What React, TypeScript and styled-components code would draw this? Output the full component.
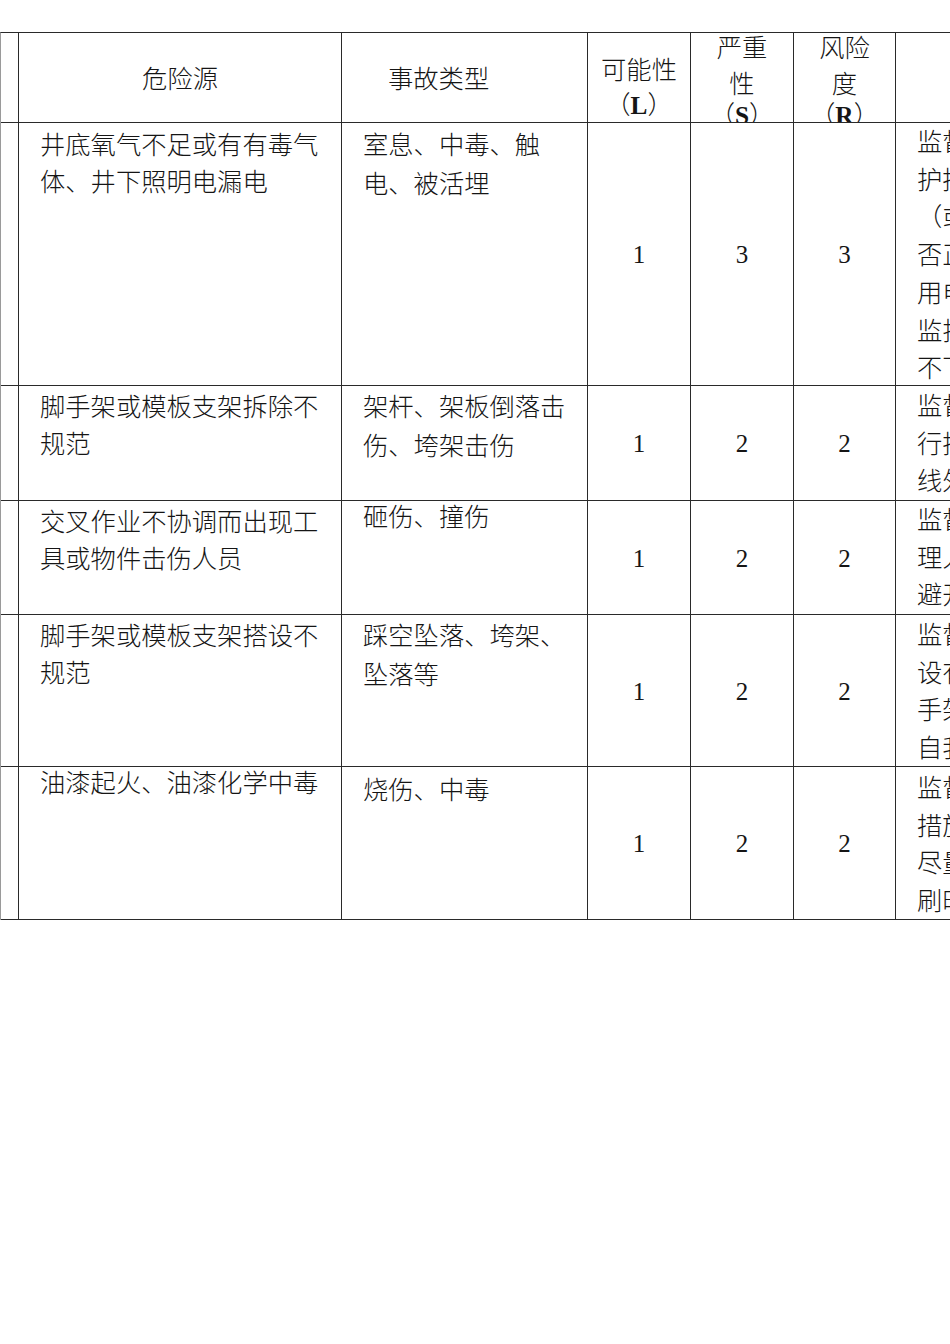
import React from 'react';
import styled, { createGlobalStyle } from 'styled-components';

const Global = createGlobalStyle`
  html, body { margin: 0; padding: 0; background: #fff; overflow: hidden; }
  body { font-family: "Liberation Serif", "Noto Sans CJK SC", serif; color: #151515; font-weight: 300; }
`;

const Page = styled.div`
  width: 950px;
  height: 1344px;
  overflow: hidden;
  padding-top: 32px;
  box-sizing: border-box;
`;

const Grid = styled.div`
  display: grid;
  grid-template-columns: 18px 323px 246px 103px 103px 102px 320px;
  grid-template-rows: 90px 263px 115px 114px 152px 153px;
  width: max-content;
  border-top: 1px solid #2a2a2a;
  border-left: 1px solid #9a9a9a;
  font-size: 25.3px;
`;

const Cell = styled.div`
  box-sizing: border-box;
  border-right: 1px solid #2a2a2a;
  border-bottom: 1px solid #2a2a2a;
  overflow: hidden;
  min-width: 0;
`;

const HeadCell = styled(Cell)<{ $left?: number; $top?: boolean }>`
  display: flex;
  flex-direction: column;
  align-items: ${(p) => (p.$left !== undefined ? 'flex-start' : 'center')};
  justify-content: ${(p) => (p.$top ? 'flex-start' : 'center')};
  padding-left: ${(p) => p.$left ?? 0}px;
  line-height: 36px;
  text-align: center;
`;

const Lines = styled.div<{ $shift?: number; $lh?: number }>`
  margin-top: ${(p) => p.$shift ?? 0}px;
  line-height: ${(p) => p.$lh ?? 36}px;
`;

const Line = styled.span<{ $lh?: number }>`
  display: block;
  white-space: nowrap;
  ${(p) => (p.$lh ? `line-height: ${p.$lh}px;` : '')}
`;

const Bold = styled.b`
  font-weight: 700;
`;

const TextCell = styled(Cell)`
  padding: 0 21px;
`;

const NumCell = styled(Cell)`
  display: flex;
  align-items: center;
  justify-content: center;
  font-size: 25px;
  padding-top: 2px;
`;

type Row = {
  hazard: string[];
  hShift: number;
  accident: string[];
  aShift: number;
  l: string;
  s: string;
  r: string;
  measure: string[];
  mShift: number;
};

const rows: Row[] = [
  {
    hazard: ['井底氧气不足或有有毒气', '体、井下照明电漏电'],
    hShift: 3.5,
    accident: ['室息、中毒、触', '电、被活埋'],
    aShift: 2.5,
    l: '1',
    s: '3',
    r: '3',
    measure: [
      '监督检查井下通风防',
      '护措施是否到位',
      '（或气体检测）是',
      '否正常，井下照明',
      '用电是否使用安全',
      '监护人员是否到位',
      '不下井作业',
    ],
    mShift: 1,
  },
  {
    hazard: ['脚手架或模板支架拆除不', '规范'],
    hShift: 2.5,
    accident: ['架杆、架板倒落击', '伤、垮架击伤'],
    aShift: 1.5,
    l: '1',
    s: '2',
    r: '2',
    measure: ['监督检查拆除作业', '行拆除前安全交底', '线外设置警戒区'],
    mShift: 2,
  },
  {
    hazard: ['交叉作业不协调而出现工', '具或物件击伤人员'],
    hShift: 3,
    accident: ['砸伤、撞伤'],
    aShift: -3,
    l: '1',
    s: '2',
    r: '2',
    measure: ['监督检查施工管', '理人员协调作业，', '避开交叉作业'],
    mShift: 1,
  },
  {
    hazard: ['脚手架或模板支架搭设不', '规范'],
    hShift: 2.5,
    accident: ['踩空坠落、垮架、', '坠落等'],
    aShift: 1.5,
    l: '1',
    s: '2',
    r: '2',
    measure: ['监督检查脚手架搭', '设有专人监护，脚', '手架搭设质量，', '自我检查合格后使用'],
    mShift: 2,
  },
  {
    hazard: ['油漆起火、油漆化学中毒'],
    hShift: -2.5,
    accident: ['烧伤、中毒'],
    aShift: 3.5,
    l: '1',
    s: '2',
    r: '2',
    measure: ['监督检查防火', '措施落实情况，', '尽量避免在密闭', '刷时应通风'],
    mShift: 3,
  },
];

const Text: React.FC<{ lines: string[]; shift: number; lh: number }> = ({ lines, shift, lh }) => (
  <Lines $shift={shift} $lh={lh}>
    {lines.map((t, i) => (
      <Line key={i}>{t}</Line>
    ))}
  </Lines>
);

export default function App() {
  return (
    <>
      <Global />
      <Page>
        <Grid>
          <HeadCell />
          <HeadCell>
            <Lines $shift={3}>危险源</Lines>
          </HeadCell>
          <HeadCell $left={46}>
            <Lines $shift={3}>事故类型</Lines>
          </HeadCell>
          <HeadCell $top>
            <Lines $shift={20} $lh={35}>
              <Line>可能性</Line>
              <Line>
                （<Bold>L</Bold>）
              </Line>
            </Lines>
          </HeadCell>
          <HeadCell $top>
            <Lines $shift={-3} $lh={36}>
              <Line>严重</Line>
              <Line>性</Line>
              <Line $lh={26}>
                （<Bold>S</Bold>）
              </Line>
            </Lines>
          </HeadCell>
          <HeadCell $top>
            <Lines $shift={-3} $lh={36}>
              <Line>风险</Line>
              <Line>度</Line>
              <Line $lh={26}>
                （<Bold>R</Bold>）
              </Line>
            </Lines>
          </HeadCell>
          <HeadCell />

          {rows.map((r, i) => (
            <React.Fragment key={i}>
              <Cell />
              <TextCell>
                <Text lines={r.hazard} shift={r.hShift} lh={37} />
              </TextCell>
              <TextCell>
                <Text lines={r.accident} shift={r.aShift} lh={39} />
              </TextCell>
              <NumCell>{r.l}</NumCell>
              <NumCell>{r.s}</NumCell>
              <NumCell>{r.r}</NumCell>
              <TextCell>
                <Text lines={r.measure} shift={r.mShift} lh={37.7} />
              </TextCell>
            </React.Fragment>
          ))}
        </Grid>
      </Page>
    </>
  );
}
